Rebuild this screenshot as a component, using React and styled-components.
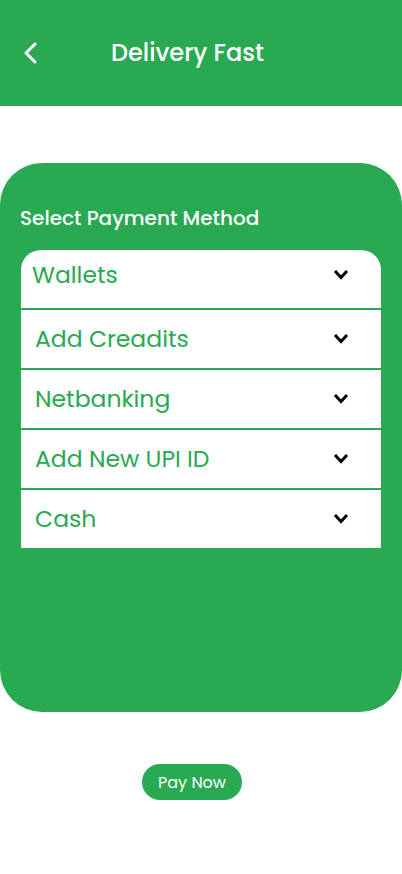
import React from "react";
import styled, { createGlobalStyle } from "styled-components";

const GREEN = "#28a952";

const GlobalStyle = createGlobalStyle`
  html, body {
    margin: 0;
    padding: 0;
    background: #ffffff;
  }
  * {
    box-sizing: border-box;
  }
  body {
    font-family: "Poppins", Inter, "Noto Sans", sans-serif;
  }
`;

const Page = styled.div`
  width: 402px;
  min-height: 874px;
  display: flex;
  flex-direction: column;
  background: #fff;
`;

const Header = styled.header`
  height: 106px;
  background: ${GREEN};
  display: flex;
  align-items: center;
  padding: 0 0 0 20px;
  color: #fff;
`;

const BackButton = styled.button`
  width: 20px;
  height: 24px;
  padding: 0;
  border: none;
  background: transparent;
  display: flex;
  align-items: center;
  justify-content: center;
  cursor: pointer;
`;

const Title = styled.h1`
  margin: 0 0 0 71px;
  font-size: 24px;
  font-weight: 500;
  line-height: 30px;
  color: #fff;
`;

const Card = styled.section`
  margin-top: 57px;
  height: 549px;
  background: ${GREEN};
  border-radius: 42px;
  padding: 44px 21px 0 21px;
  display: flex;
  flex-direction: column;
`;

const Label = styled.h2`
  margin: 0 0 0 -1px;
  font-size: 20px;
  font-weight: 500;
  color: #fff;
  line-height: 22px;
`;

const Methods = styled.ul`
  list-style: none;
  margin: 21px 0 0 0;
  padding: 0;
  width: 360px;
  display: flex;
  flex-direction: column;
  gap: 2px;
`;

const Method = styled.li`
  height: 58px;
  background: #fff;
  display: flex;
  align-items: center;
  justify-content: space-between;
  padding: ${(p) => (p.$first ? "0 32px 10px 11px" : "0 32px 2px 14px")};
  border-radius: ${(p) => (p.$first ? "20px 20px 0 0" : "0")};
`;

const MethodName = styled.span`
  font-size: 23.5px;
  font-weight: 400;
  color: ${GREEN};
`;

const Footer = styled.div`
  display: flex;
  justify-content: center;
  padding: 52px 18px 0 0;
`;

const PayButton = styled.button`
  width: 100px;
  height: 36px;
  border: none;
  border-radius: 18px;
  background: ${GREEN};
  color: #fff;
  font-family: inherit;
  font-size: 16px;
  cursor: pointer;
`;

const Chevron = () => (
  <svg width="16" height="11" viewBox="0 0 16 11">
    <path d="M2 2 L8 8.5 L14 2" fill="none" stroke="#000" strokeWidth="3" strokeLinecap="butt" strokeLinejoin="miter" />
  </svg>
);

const methods = ["Wallets", "Add Creadits", "Netbanking", "Add New UPI ID", "Cash"];

export default function App() {
  return (
    <Page>
      <GlobalStyle />
      <Header>
        <BackButton aria-label="Back">
          <svg width="16" height="22" viewBox="0 0 16 22">
            <path d="M13 2 L4 11 L13 20" fill="none" stroke="#fff" strokeWidth="3" strokeLinecap="round" strokeLinejoin="round" />
          </svg>
        </BackButton>
        <Title>Delivery Fast</Title>
      </Header>
      <Card>
        <Label>Select Payment Method</Label>
        <Methods>
          {methods.map((m, i) => (
            <Method key={m} $first={i === 0}>
              <MethodName>{m}</MethodName>
              <Chevron />
            </Method>
          ))}
        </Methods>
      </Card>
      <Footer>
        <PayButton>Pay Now</PayButton>
      </Footer>
    </Page>
  );
}
